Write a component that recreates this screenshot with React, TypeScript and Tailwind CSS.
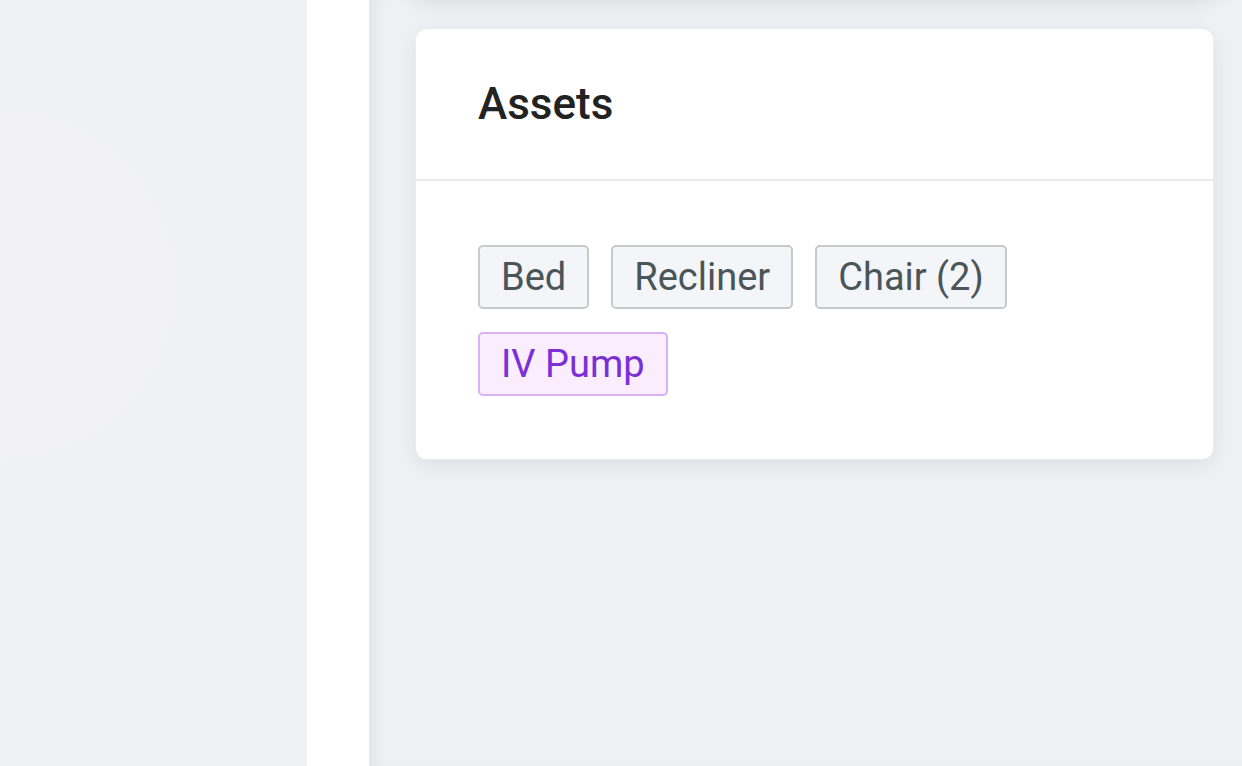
import React from 'react';

interface Asset {
  label: string;
  active?: boolean;
}

const assets: Asset[] = [
  { label: 'Bed' },
  { label: 'Recliner' },
  { label: 'Chair (2)' },
  { label: 'IV Pump', active: true },
];

const AssetTag: React.FC<{ asset: Asset }> = ({ asset }) => (
  <span
    className={
      asset.active
        ? 'flex h-[64px] items-center rounded-[5px] border-2 border-[#d9b2f7] bg-[#f9edfe] px-[21px] text-[38px] leading-none text-[#7b2fd6]'
        : 'flex h-[64px] items-center rounded-[5px] border-2 border-[#c8c9cb] bg-[#f3f5f8] px-[21px] text-[38px] leading-none text-[#4a5558]'
    }
  >
    {asset.label}
  </span>
);

export default function App() {
  return (
    <div className="flex h-[766px] w-[1242px] overflow-hidden bg-[#f0f1f5] font-['Roboto',sans-serif]">
      <aside className="w-[307px] shrink-0 bg-[radial-gradient(circle_at_0px_285px,#f2f2f4_0,#f2f2f4_170px,transparent_182px)]" />
      <div className="w-[63px] shrink-0 border-r border-[#e7e8ec] bg-white" />
      <main className="flex-1 pl-[45px] pr-[28px] shadow-[inset_14px_0_18px_-10px_rgba(0,0,0,0.07)]">
        <div className="-mt-[200px] h-[197px] rounded-xl bg-white shadow-[0_6px_24px_rgba(0,0,0,0.09)]" />
        <section className="mt-[31px] rounded-xl border border-[#ececef] bg-white shadow-[0_6px_22px_rgba(0,0,0,0.08)]">
          <div className="flex h-[152px] items-center border-b-2 border-[#ececec] px-[62px]">
            <h2 className="text-[44px] font-medium text-[#222222]">Assets</h2>
          </div>
          <div className="flex flex-wrap gap-x-[22px] gap-y-[23px] px-[62px] pt-[64px] pb-[63px]">
            {assets.map((a) => (
              <AssetTag key={a.label} asset={a} />
            ))}
          </div>
        </section>
      </main>
    </div>
  );
}
